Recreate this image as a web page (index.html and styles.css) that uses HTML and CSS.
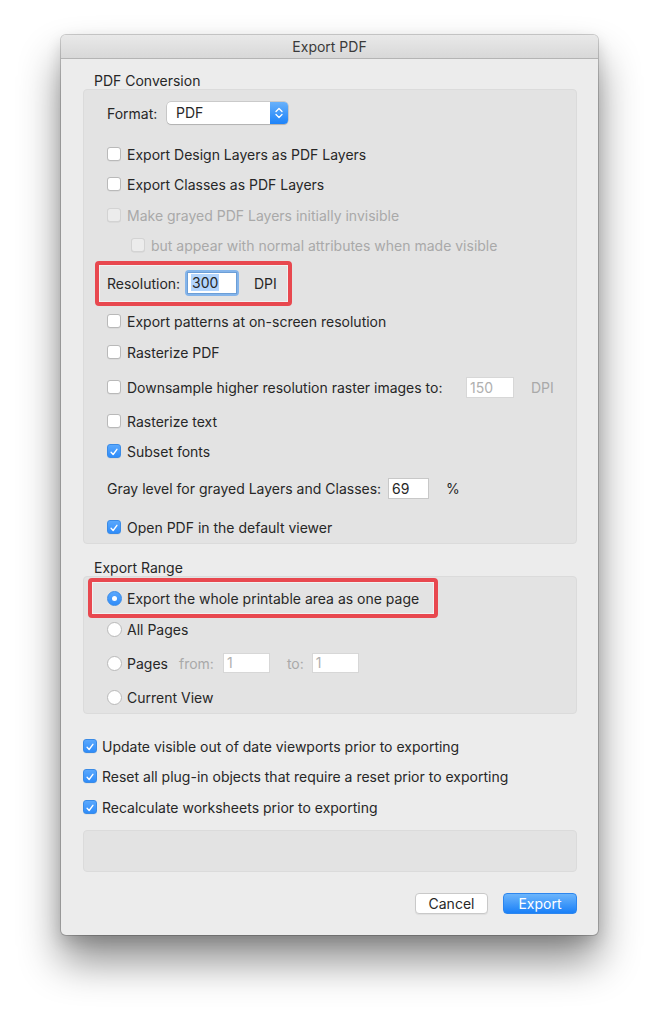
FILE: index.html
```html
<!DOCTYPE html>
<html>
<head>
<meta charset="utf-8">
<link rel="stylesheet" href="styles.css">
</head>
<body>
<div class="window">
  <div class="titlebar">Export PDF</div>
  <div class="content">
    <div class="section-label">PDF Conversion</div>
    <div class="group g1">
      <div class="row">
        <span class="lbl fmt-lbl">Format:</span>
        <div class="popup">
          <span class="popup-val">PDF</span>
          <span class="stepper">
            <svg width="10" height="16" viewBox="0 0 10 16"><path d="M2 6.5 L5 3.5 L8 6.5 M2 9.5 L5 12.5 L8 9.5" fill="none" stroke="#fff" stroke-width="1.3" stroke-linecap="round" stroke-linejoin="round"/></svg>
          </span>
        </div>
      </div>
      <div class="row mt21"><span class="cb"></span><span>Export Design Layers as PDF Layers</span></div>
      <div class="row"><span class="cb"></span><span>Export Classes as PDF Layers</span></div>
      <div class="row mt11 disabled"><span class="cb dis"></span><span>Make grayed PDF Layers initially invisible</span></div>
      <div class="row indent disabled"><span class="cb dis"></span><span>but appear with normal attributes when made visible</span></div>
      <div class="row mt18">
        <div class="hl hl-res">
          <span class="lbl res-lbl">Resolution:</span>
          <span class="focus"><span class="field res-field"><span class="sel">300</span></span></span>
          <span class="unit">DPI</span>
        </div>
      </div>
      <div class="row mt18"><span class="cb"></span><span>Export patterns at on-screen resolution</span></div>
      <div class="row mt11"><span class="cb"></span><span>Rasterize PDF</span></div>
      <div class="row mt15">
        <span class="cb"></span><span class="w-down">Downsample higher resolution raster images to:</span>
        <span class="field dis-field ds-field">150</span>
        <span class="unit dim">DPI</span>
      </div>
      <div class="row mt14"><span class="cb"></span><span>Rasterize text</span></div>
      <div class="row"><span class="cb on"><svg width="14" height="14" viewBox="0 0 14 14"><path d="M3.6 7.4 L6 9.9 L10.4 3.9" fill="none" stroke="#fff" stroke-width="1.6" stroke-linecap="round" stroke-linejoin="round"/></svg></span><span>Subset fonts</span></div>
      <div class="row mt17">
        <span class="lbl w-gray">Gray level for grayed Layers and Classes:</span>
        <span class="field gray-field">69</span>
        <span class="unit pct">%</span>
      </div>
      <div class="row mt19"><span class="cb on"><svg width="14" height="14" viewBox="0 0 14 14"><path d="M3.6 7.4 L6 9.9 L10.4 3.9" fill="none" stroke="#fff" stroke-width="1.6" stroke-linecap="round" stroke-linejoin="round"/></svg></span><span>Open PDF in the default viewer</span></div>
    </div>

    <div class="section-label mt16">Export Range</div>
    <div class="group g2">
      <div class="row">
        <div class="hl hl-radio">
          <span class="radio on"></span><span>Export the whole printable area as one page</span>
        </div>
      </div>
      <div class="row mt11"><span class="radio"></span><span>All Pages</span></div>
      <div class="row mt14">
        <span class="radio"></span><span>Pages</span>
        <span class="dim from">from:</span>
        <span class="field dis-field pg-field">1</span>
        <span class="dim to">to:</span>
        <span class="field dis-field pg-field">1</span>
      </div>
      <div class="row mt14"><span class="radio"></span><span>Current View</span></div>
    </div>

    <div class="outer-checks">
      <div class="row"><span class="cb on"><svg width="14" height="14" viewBox="0 0 14 14"><path d="M3.6 7.4 L6 9.9 L10.4 3.9" fill="none" stroke="#fff" stroke-width="1.6" stroke-linecap="round" stroke-linejoin="round"/></svg></span><span>Update visible out of date viewports prior to exporting</span></div>
      <div class="row"><span class="cb on"><svg width="14" height="14" viewBox="0 0 14 14"><path d="M3.6 7.4 L6 9.9 L10.4 3.9" fill="none" stroke="#fff" stroke-width="1.6" stroke-linecap="round" stroke-linejoin="round"/></svg></span><span>Reset all plug-in objects that require a reset prior to exporting</span></div>
      <div class="row mt11"><span class="cb on"><svg width="14" height="14" viewBox="0 0 14 14"><path d="M3.6 7.4 L6 9.9 L10.4 3.9" fill="none" stroke="#fff" stroke-width="1.6" stroke-linecap="round" stroke-linejoin="round"/></svg></span><span>Recalculate worksheets prior to exporting</span></div>
    </div>

    <div class="empty-box"></div>

    <div class="buttons">
      <button class="btn cancel">Cancel</button>
      <button class="btn primary">Export</button>
    </div>
  </div>
</div>
</body>
</html>
```

FILE: styles.css
```css
* { box-sizing: border-box; }

html, body {
  margin: 0;
  padding: 0;
  background: #ffffff;
}

body {
  font-family: "Inter", "Liberation Sans", sans-serif;
  font-size: 14px;
  color: #272727;
  padding: 35px 0 0 61px;
  min-height: 1024px;
  overflow: hidden;
}

.window {
  width: 537px;
  height: 900px;
  background: #ececec;
  border-radius: 5px;
  box-shadow: 0 0 0 1px rgba(0,0,0,0.18), 0 26px 42px rgba(0,0,0,0.45), 0 6px 16px rgba(0,0,0,0.14);
  overflow: hidden;
}

.titlebar {
  height: 24px;
  line-height: 23px;
  text-align: center;
  background: linear-gradient(#e9e9e9, #d8d8d8);
  border-bottom: 1px solid #b4b4b4;
  color: #3a3a3a;
}

.content {
  padding: 14px 21px 0 22px;
}

.section-label {
  height: 16px;
  line-height: 16px;
  padding-left: 11px;
}

.group {
  background: #e3e3e3;
  border: 1px solid #dbdbdb;
  border-radius: 4px;
  display: flex;
  flex-direction: column;
  gap: 10px;
}

.g1 { padding: 13px 0 6px 23px; }
.g2 { padding: 11px 0 6px 23px; gap: 0; }

.row {
  height: 20px;
  display: flex;
  align-items: center;
  white-space: nowrap;
}

.mt11 { margin-top: 1px; }
.g2 .mt11 { margin-top: 11px; }
.g2 .mt14 { margin-top: 14px; }
.mt14 { margin-top: 4px; }
.mt15 { margin-top: 5px; }
.mt17 { margin-top: 7px; }
.mt18 { margin-top: 8px; }
.mt19 { margin-top: 9px; }
.mt21 { margin-top: 11px; }
.section-label.mt16 { margin-top: 16px; }

.indent { padding-left: 24px; }

.disabled { color: #a9a9a9; }

.fmt-lbl { width: 60px; flex: none; }
.res-lbl { width: 78px; flex: none; }

/* checkbox */
.cb {
  width: 14px;
  height: 14px;
  flex: none;
  background: #fff;
  border: 1px solid #b9b9b9;
  border-radius: 3px;
  margin-right: 6px;
  box-shadow: 0 0.5px 0.5px rgba(0,0,0,0.08);
  display: inline-flex;
}
.cb.dis {
  background: #ececec;
  border-color: #d3d3d3;
}
.cb.on {
  background: linear-gradient(#5aa8fd, #2f8cf9);
  border-color: #3a8be6;
}

/* radio */
.radio {
  width: 15px;
  height: 15px;
  flex: none;
  border-radius: 50%;
  background: #fff;
  border: 1px solid #b9b9b9;
  margin-right: 5px;
  position: relative;
}
.radio.on {
  background: linear-gradient(#5aa8fd, #2f8cf9);
  border-color: #3a8be6;
}
.radio.on::after {
  content: "";
  position: absolute;
  left: 4px;
  top: 4px;
  width: 5px;
  height: 5px;
  border-radius: 50%;
  background: #fff;
}

/* popup */
.popup {
  width: 121px;
  height: 22px;
  display: flex;
  background: #fff;
  border-radius: 4px;
  box-shadow: 0 0 0 0.5px rgba(0,0,0,0.22), 0 1px 1px rgba(0,0,0,0.12);
  overflow: hidden;
}
.popup-val {
  flex: 1;
  padding-left: 9px;
  line-height: 22px;
}
.stepper {
  width: 18px;
  background: linear-gradient(#68b1fb, #1d83f9);
  display: flex;
  align-items: center;
  justify-content: center;
}

/* fields */
.field {
  background: #fff;
  border: 1px solid #c8c8c8;
  height: 21px;
  line-height: 19px;
  padding-left: 3px;
  display: inline-block;
}
.dis-field { color: #b0b0b0; border-color: #d7d7d7; }

.focus {
  display: inline-flex;
  padding: 2px;
  border-radius: 4px;
  background: #84b4ea;
  margin-right: 15px;
}
.res-field {
  width: 50px;
  height: 22px;
  border-color: #6c9ed6;
  line-height: 20px;
}
.sel { background: #b3d5fd; padding: 0 1px; }

.dim { color: #a9a9a9; }

.w-down { width: 339px; flex: none; }
.ds-field { width: 48px; margin-right: 17px; }

.w-gray { width: 281px; flex: none; }
.gray-field { width: 41px; margin-right: 17px; }

.from { margin-left: 11px; margin-right: 9px; }
.to { margin-left: 17px; margin-right: 8px; }
.pg-field { width: 47px; height: 20px; line-height: 18px; }

/* highlight boxes */
.hl {
  display: flex;
  align-items: center;
  border: 4px solid #e8484f;
  border-radius: 4px;
  box-shadow: inset 0 0 0 1px #f1f1f1;
}
.hl-res {
  height: 45px;
  margin-left: -12px;
  padding: 0 11px 0 8px;
}
.hl-radio {
  height: 40px;
  margin-left: -19px;
  width: 350px;
  padding-left: 15px;
}

/* bottom */
.outer-checks {
  margin-top: 22px;
  display: flex;
  flex-direction: column;
  gap: 10px;
}
.outer-checks .mt11 { margin-top: 1px; }
.outer-checks .cb { margin-right: 5px; }

.empty-box {
  height: 42px;
  margin-top: 13px;
  background: #e3e3e3;
  border: 1px solid #dbdbdb;
  border-radius: 4px;
}

.buttons {
  margin-top: 21px;
  display: flex;
  justify-content: flex-end;
  gap: 15px;
}
.btn {
  font-family: inherit;
  font-size: 14px;
  height: 21px;
  border-radius: 4px;
  padding: 0;
  line-height: 19px;
}
.cancel {
  width: 73px;
  background: #fff;
  color: #272727;
  border: 1px solid #c9c9c9;
  box-shadow: 0 1px 1px rgba(0,0,0,0.06);
}
.primary {
  width: 74px;
  background: linear-gradient(#6cb5fb, #1a80f8);
  border: 1px solid #2d86ee;
  color: #fff;
}
```
